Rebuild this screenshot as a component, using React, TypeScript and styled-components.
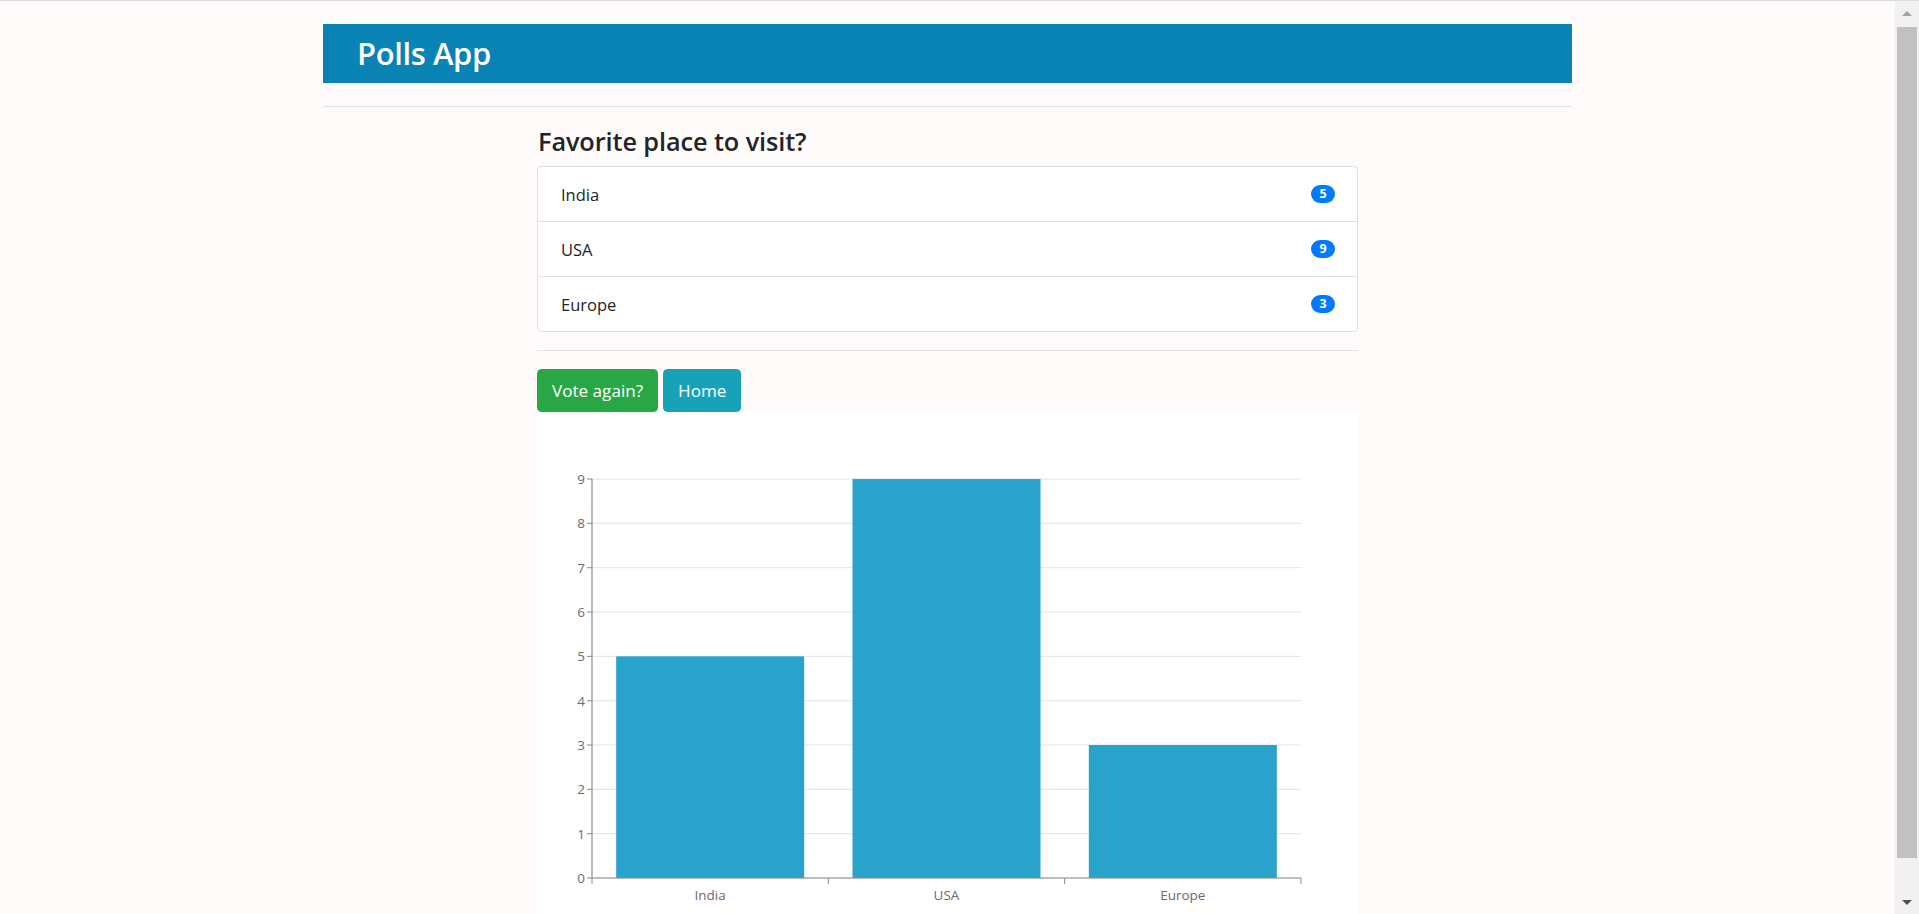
import React from "react";
import styled, { createGlobalStyle } from "styled-components";

const GlobalStyle = createGlobalStyle`
  html, body {
    margin: 0;
    padding: 0;
    height: 100%;
    overflow: hidden;
  }
  body {
    font-family: "Open Sans", "Noto Sans", sans-serif;
    background: #fffbfa;
    color: #212529;
  }
  * { box-sizing: border-box; }
`;

const Page = styled.div`
  display: flex;
  height: 100vh;
  border-top: 1px solid #dadce0;
`;

const Main = styled.main`
  flex: 1;
  min-width: 0;
  overflow: hidden;
`;

const Container = styled.div`
  width: 1249px;
  margin: 23px auto 0;
`;

const Header = styled.header`
  height: 59px;
  background: #0982b4;
  display: flex;
  align-items: center;
  padding-left: 34px;
`;

const Title = styled.h1`
  margin: 0;
  font-size: 31px;
  font-weight: 600;
  color: #ffffff;
  line-height: 1;
  letter-spacing: -0.4px;
`;

const Rule = styled.hr`
  margin: 23px 0 18px;
  border: 0;
  border-top: 1px solid #e3e3e3;
`;

const Column = styled.section`
  width: 821px;
  margin: 0 auto;
`;

const Question = styled.h4`
  margin: 0 0 9px;
  font-size: 25.3px;
  font-weight: 600;
  line-height: 32.4px;
  color: #212529;
  padding-left: 1px;
  letter-spacing: -0.1px;
`;

const List = styled.ul`
  list-style: none;
  margin: 0;
  padding: 0;
  background: #fff;
  border: 1px solid #dfdfdf;
  border-radius: 4.5px;
`;

const Item = styled.li`
  display: flex;
  align-items: center;
  justify-content: space-between;
  height: 54px;
  padding: 0 22px 0 23px;
  font-size: 16.5px;
  color: #212529;
  & + & {
    border-top: 1px solid #dfdfdf;
    height: 55px;
  }
`;

const Badge = styled.span`
  display: inline-block;
  min-width: 24px;
  padding: 2px 7px;
  border-radius: 10rem;
  background: #007bff;
  color: #fff;
  font-size: 12.5px;
  font-weight: 700;
  line-height: 14px;
  text-align: center;
`;

const InnerRule = styled.hr`
  margin: 18px 0;
  border: 0;
  border-top: 1px solid #e3e3e3;
`;

const Actions = styled.div`
  display: flex;
  gap: 5px;
`;

const Button = styled.button<{ $variant: "success" | "info" }>`
  height: 43px;
  padding: 0 14px;
  border: 1px solid ${(p) => (p.$variant === "success" ? "#28a745" : "#17a2b8")};
  background: ${(p) => (p.$variant === "success" ? "#28a745" : "#17a2b8")};
  color: #fff;
  font-family: "Open Sans", "Noto Sans", sans-serif;
  font-size: 17.1px;
  border-radius: 4.5px;
  cursor: pointer;
`;

const ChartPanel = styled.div`
  background: #fff;
  width: 821px;
`;

const Scrollbar = styled.aside`
  width: 24px;
  background: #f1f1f1;
  display: flex;
  flex-direction: column;
  align-items: center;
`;

const ArrowBox = styled.div`
  height: 24px;
  width: 100%;
  display: flex;
  align-items: center;
  justify-content: center;
`;

const Arrow = styled.span<{ $dir: "up" | "down" }>`
  width: 0;
  height: 0;
  border-left: 5px solid transparent;
  border-right: 5px solid transparent;
  ${(p) =>
    p.$dir === "up"
      ? "border-bottom: 5px solid #a3a3a3;"
      : "border-top: 5px solid #505050;"}
`;

const Thumb = styled.div`
  width: 20px;
  height: 831px;
  margin-top: 2px;
  background: #c1c1c1;
`;

const Spacer = styled.div`
  flex: 1;
`;

const options = [
  { name: "India", votes: 5 },
  { name: "USA", votes: 9 },
  { name: "Europe", votes: 3 },
];

const Chart: React.FC = () => {
  const left = 55;
  const right = 764;
  const bottom = 466;
  const unit = 44.33;
  const band = (right - left) / options.length;
  const barW = 188;
  const ticks = Array.from({ length: 10 }, (_, i) => i);
  return (
    <svg width={821} height={520} style={{ display: "block" }}>
      {ticks.map((t) => (
        <line
          key={"g" + t}
          x1={left}
          x2={right}
          y1={bottom - t * unit}
          y2={bottom - t * unit}
          stroke="#e2e2e2"
          strokeWidth={1}
        />
      ))}
      {options.map((o, i) => {
        const x = left + i * band + (band - barW) / 2;
        const h = o.votes * unit;
        return <rect key={o.name} x={x} y={bottom - h} width={barW} height={h} fill="#29a2cc" />;
      })}
      <line x1={left} x2={left} y1={bottom - 9 * unit} y2={bottom} stroke="#8a8a8a" strokeWidth={1.2} />
      {ticks.map((t) => (
        <g key={"t" + t}>
          <line x1={left - 5} x2={left} y1={bottom - t * unit} y2={bottom - t * unit} stroke="#8a8a8a" />
          <text
            x={left - 7}
            y={bottom - t * unit}
            textAnchor="end"
            dominantBaseline="central"
            fontSize={13.5}
            fontFamily="Open Sans, sans-serif"
            fill="#6b6b6b"
          >
            {t}
          </text>
        </g>
      ))}
      <line x1={left} x2={right} y1={bottom} y2={bottom} stroke="#8a8a8a" strokeWidth={1.2} />
      {[0, 1, 2, 3].map((i) => (
        <line
          key={"x" + i}
          x1={left + i * band}
          x2={left + i * band}
          y1={bottom}
          y2={bottom + 6}
          stroke="#8a8a8a"
        />
      ))}
      {options.map((o, i) => (
        <text
          key={"l" + o.name}
          x={left + i * band + band / 2}
          y={bottom + 22}
          textAnchor="middle"
          fontSize={13.5}
          fontFamily="Open Sans, sans-serif"
          fill="#6b6b6b"
        >
          {o.name}
        </text>
      ))}
    </svg>
  );
};

export default function App() {
  return (
    <>
      <GlobalStyle />
      <Page>
        <Main>
          <Container>
            <Header>
              <Title>Polls App</Title>
            </Header>
            <Rule />
            <Column>
              <Question>Favorite place to visit?</Question>
              <List>
                {options.map((o) => (
                  <Item key={o.name}>
                    <span>{o.name}</span>
                    <Badge>{o.votes}</Badge>
                  </Item>
                ))}
              </List>
              <InnerRule />
              <Actions>
                <Button $variant="success">Vote again?</Button>
                <Button $variant="info">Home</Button>
              </Actions>
              <ChartPanel>
                <Chart />
              </ChartPanel>
            </Column>
          </Container>
        </Main>
        <Scrollbar>
          <ArrowBox>
            <Arrow $dir="up" />
          </ArrowBox>
          <Thumb />
          <Spacer />
          <ArrowBox>
            <Arrow $dir="down" />
          </ArrowBox>
        </Scrollbar>
      </Page>
    </>
  );
}
